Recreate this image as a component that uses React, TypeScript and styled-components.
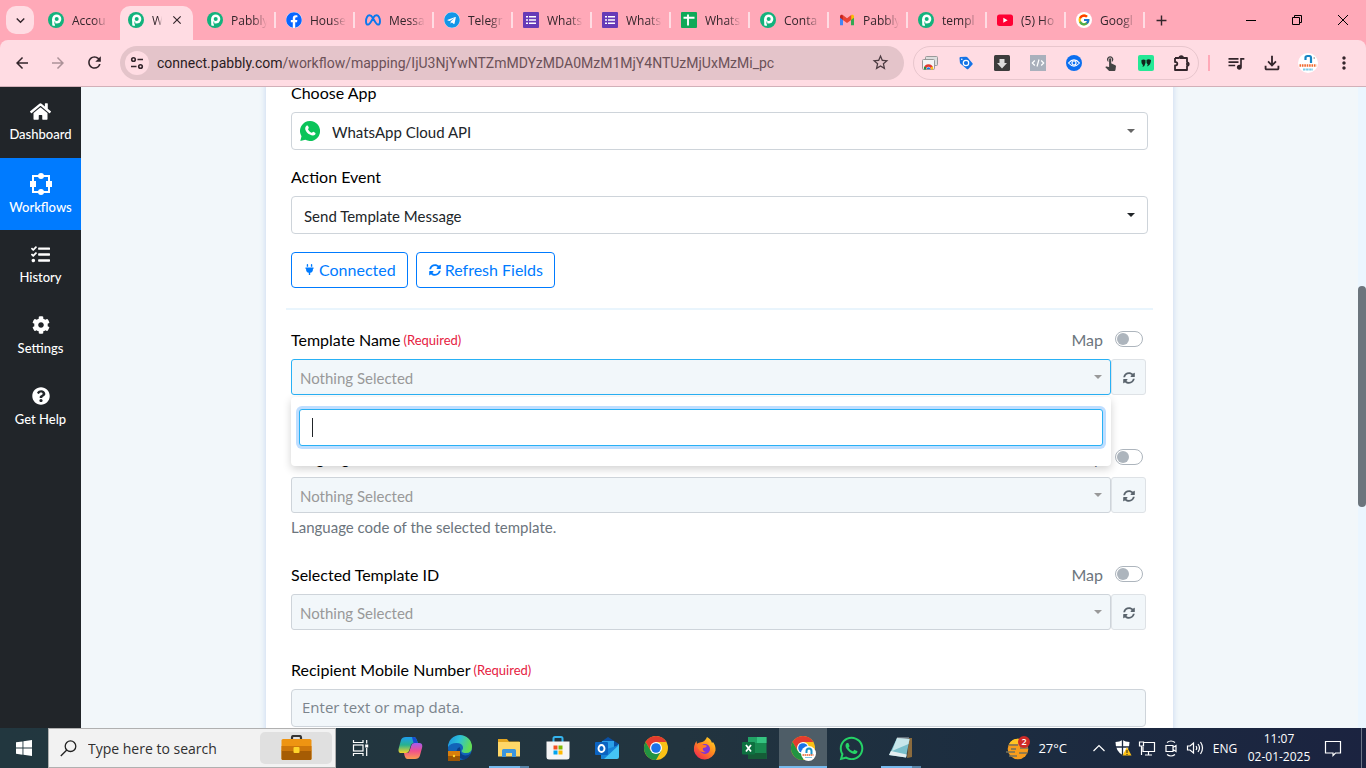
import React from "react";
import styled, { createGlobalStyle, css } from "styled-components";
import {
  FaHome,
  FaTasks,
  FaCog,
  FaQuestionCircle,
  FaPlug,
  FaSyncAlt,
  FaFacebook,
  FaTelegram,
  FaWhatsapp,
} from "react-icons/fa";
import { FcGoogle } from "react-icons/fc";
import {
  MdArrowBack,
  MdArrowForward,
  MdRefresh,
  MdStarOutline,
  MdAdd,
  MdClose,
  MdMoreVert,
  MdOutlineFileDownload,
  MdOutlineQueueMusic,
  MdTouchApp,
  MdKeyboardArrowDown,
} from "react-icons/md";

const ui = '"Open Sans", "Noto Sans", sans-serif';
const page = 'Lato, "Liberation Sans", sans-serif';

const Global = createGlobalStyle`
  *, *::before, *::after { box-sizing: border-box; }
  body { margin: 0; overflow: hidden; font-family: ${page}; }
  button, input, select { font: inherit; color: inherit; }
  button { border: 0; background: none; padding: 0; display: flex; align-items: center; justify-content: center; }
  svg { display: block; flex: none; }
`;

const Screen = styled.div`
  display: flex;
  flex-direction: column;
  height: 100vh;
`;

/* ---------- browser chrome ---------- */

const TabStrip = styled.header`
  display: flex;
  align-items: stretch;
  flex: none;
  height: 40px;
  background: #ffa9b8;
  font: 12px ${ui};
  color: #33252b;
`;

const TabSearch = styled.button`
  flex: none;
  width: 28px;
  height: 28px;
  margin: 6px 4px 6px 6px;
  border-radius: 10px;
  background: #ffdce3;
`;

const Tab = styled.div<{ $line?: boolean }>`
  position: relative;
  display: flex;
  align-items: center;
  gap: 8px;
  flex: 0 1 79px;
  min-width: 0;
  padding-left: 10px;
  ${(p) =>
    p.$line &&
    css`
      &::after {
        content: "";
        position: absolute;
        right: 0;
        top: 12px;
        width: 2px;
        height: 16px;
        background: #ffdce3;
      }
    `}
`;

const ActiveTab = styled.div`
  display: flex;
  align-items: center;
  gap: 8px;
  flex: 0 1 73px;
  margin: 6px 4px 0 3px;
  padding: 0 8px 6px;
  border-radius: 10px 10px 0 0;
  background: #ffdce3;
`;

const TabTitle = styled.span<{ $w?: number }>`
  width: ${(p) => p.$w ?? 36}px;
  overflow: hidden;
  white-space: nowrap;
  mask-image: linear-gradient(to right, #000 60%, transparent);
`;

const NewTab = styled.button`
  width: 32px;
`;

const WindowButtons = styled.div`
  display: flex;
  margin-left: auto;
`;

const WindowButton = styled.button`
  width: 46px;
`;

const ToolbarBack = styled.div`
  flex: none;
  background: #ffa9b8;
`;

const Toolbar = styled.div`
  display: flex;
  align-items: center;
  height: 47px;
  padding: 0 4px 1px;
  border-bottom: 1px solid #d2b0b8;
  border-radius: 8px 8px 0 0;
  background: #ffdce3;
  color: #33252b;
`;

const ToolButton = styled.button<{ $dim?: boolean }>`
  flex: none;
  width: 36px;
  height: 34px;
  opacity: ${(p) => (p.$dim ? 0.4 : 1)};
`;

const Omnibox = styled.div`
  display: flex;
  align-items: center;
  flex: 1;
  min-width: 0;
  height: 34px;
  margin: 0 9px 0 8px;
  padding: 0 6px 0 5px;
  border-radius: 17px;
  background: #e4c4ca;
  font: 14px Roboto, ${ui};
`;

const SiteInfo = styled.button`
  flex: none;
  width: 24px;
  height: 24px;
  margin-right: 8px;
  border-radius: 12px;
  background: #ffdce3;
`;

const Url = styled.span`
  flex: 1;
  overflow: hidden;
  white-space: nowrap;
  color: #6b5158;
  b {
    font-weight: 400;
    color: #2a1c22;
  }
`;

const Extensions = styled.div`
  display: flex;
  align-items: center;
  gap: 6px;
  flex: none;
  height: 34px;
  margin-right: 9px;
  padding: 0 1px;
  border: 1px solid #e8c6cd;
  border-radius: 17px;
`;

const ExtensionButton = styled.button`
  width: 30px;
  height: 30px;
`;

const ToolDivider = styled.span`
  width: 2px;
  height: 16px;
  margin-right: 8px;
  background: #ffa9b8;
`;

/* ---------- application ---------- */

const Workspace = styled.div`
  display: flex;
  flex: 1;
  min-height: 0;
  background: #f2f7fa;
`;

const Sidebar = styled.nav`
  flex: none;
  width: 81px;
  background: #212529;
`;

const NavLink = styled.a<{ $active?: boolean }>`
  display: flex;
  flex-direction: column;
  align-items: center;
  gap: 1px;
  height: ${(p) => (p.$active ? 72 : 71)}px;
  padding-top: ${(p) => (p.$active ? 14 : 12)}px;
  background: ${(p) => (p.$active ? "#007bff" : "transparent")};
  color: #fff;
  font-size: 13px;
  font-weight: 500;
  line-height: 20px;
  text-decoration: none;
`;

const NavIcon = styled.span`
  display: flex;
  align-items: center;
  justify-content: center;
  height: 24px;
`;

const Content = styled.main`
  flex: 1;
  min-width: 0;
  overflow: hidden;
`;

const Card = styled.form`
  width: min(907px, 100%);
  margin: -4px auto 0;
  padding: 0 25px 40px;
  background: #fff;
  box-shadow: 0 0 6px #c3d5ee;
  color: #000;
  font-size: 15px;
`;

const Label = styled.label`
  display: block;
  margin-bottom: 9px;
  font-size: 16px;
  line-height: 20px;
`;

const SelectBox = styled.div<{ $gap?: number }>`
  position: relative;
  display: flex;
  margin-bottom: ${(p) => p.$gap ?? 0}px;
`;

const PlainSelect = styled.select<{ $inset?: boolean }>`
  appearance: none;
  width: 100%;
  height: 38px;
  padding: 2px 32px 0 ${(p) => (p.$inset ? 40 : 12)}px;
  border: 1px solid #ced4da;
  border-radius: 4px;
  background: #fff;
  color: #212529;
`;

const MutedSelect = styled.select<{ $open?: boolean }>`
  appearance: none;
  width: 100%;
  height: 36px;
  padding: 1px 32px 0 8px;
  border: 1px solid ${(p) => (p.$open ? "#29b1f5" : "#ced4da")};
  border-radius: 3px;
  background: #f2f7fa;
  color: #999;
`;

const Caret = styled.span<{ $color?: string; $right?: number }>`
  position: absolute;
  right: ${(p) => p.$right ?? 13}px;
  top: 50%;
  margin-top: -2px;
  border: 4px solid transparent;
  border-top-color: ${(p) => p.$color ?? "#212529"};
  border-bottom: 0;
  pointer-events: none;
`;

const AppIcon = styled.span`
  position: absolute;
  left: 9px;
  top: 9px;
`;

const ButtonRow = styled.div`
  display: flex;
  gap: 8px;
  margin-bottom: 20px;
`;

const OutlineButton = styled.button`
  gap: 4px;
  height: 36px;
  padding: 0 11px 1px 12px;
  border: 1px solid #007bff;
  border-radius: 4px;
  background: #fff;
  color: #007bff;
  font-size: 16px;
`;

const Rule = styled.hr`
  height: 2px;
  margin: 0 -5px 20px;
  border: 0;
  background: #e9f5fd;
`;

const Field = styled.div<{ $gap: number }>`
  position: relative;
  margin: 0 2px ${(p) => p.$gap}px 0;
`;

const FieldHead = styled.div`
  display: flex;
  align-items: center;
  height: 20px;
  margin-bottom: 9px;
  font-size: 16px;
  line-height: 20px;
`;

const Required = styled.span`
  margin-left: 3px;
  color: #e6213f;
  font-size: 13px;
`;

const MapLabel = styled.label`
  display: flex;
  align-items: center;
  gap: 12px;
  margin-left: auto;
  padding-right: 3px;
  color: #6c757d;
`;

const Toggle = styled.input`
  appearance: none;
  display: flex;
  align-items: center;
  width: 28px;
  height: 16px;
  margin: 0 0 2px;
  padding-left: 1px;
  border: 1px solid #adb5bd;
  border-radius: 8px;
  background: #fff;
  &::before {
    content: "";
    width: 12px;
    height: 12px;
    border-radius: 6px;
    background: #adb5bd;
  }
`;

const FieldRow = styled.div`
  display: flex;
`;

const FieldSelect = styled(SelectBox)`
  flex: 1;
`;

const ReloadButton = styled.button`
  flex: none;
  width: 35px;
  height: 36px;
  padding-top: 1px;
  border: 1px solid #dee2e6;
  border-radius: 3px;
  background: #f2f7fa;
  color: #5a646d;
`;

const Hint = styled.p`
  margin: 4px 0 0;
  color: #6c757d;
  line-height: 20px;
`;

const Menu = styled.div`
  position: absolute;
  z-index: 1;
  top: 67px;
  left: 0;
  right: 35px;
  padding: 12px 8px 20px;
  border-radius: 4px;
  background: #fff;
  box-shadow: 0 3px 8px rgba(0, 0, 0, 0.18);
`;

const SearchWrap = styled.div`
  position: relative;
  &::after {
    content: "";
    position: absolute;
    left: 13px;
    top: 9px;
    width: 1px;
    height: 19px;
    background: #212529;
  }
`;

const SearchInput = styled.input`
  display: block;
  width: 100%;
  height: 37px;
  padding: 0 12px;
  border: 1px solid #29b1f5;
  border-radius: 3px;
  outline: 0;
  box-shadow: 0 0 0 3px #bfdeff;
  caret-color: transparent;
`;

const TextInput = styled.input`
  display: block;
  width: 100%;
  height: 38px;
  padding: 0 10px 2px;
  border: 1px solid #ced4da;
  border-radius: 4px;
  background: #f2f7fa;
  font: 15px ${ui};
  &::placeholder {
    color: #7b848c;
    opacity: 1;
  }
`;

const ScrollTrack = styled.div`
  flex: none;
  width: 8px;
  padding-top: 199px;
  background: #ebf6ff;
`;

const ScrollThumb = styled.div`
  height: 221px;
  border-radius: 4px;
  background: #6c757d;
`;

/* ---------- taskbar ---------- */

const Taskbar = styled.footer`
  display: flex;
  align-items: stretch;
  flex: none;
  height: 40px;
  background: linear-gradient(to right, #22373f, #22343f 50%, #1c2d40 72%, #1b2340);
  color: #fff;
  font: 12px ${ui};
`;

const TaskButton = styled.button<{ $w?: number; $active?: boolean; $open?: boolean }>`
  flex: none;
  width: ${(p) => p.$w ?? 49}px;
  background: ${(p) => (p.$active ? "#4e5d67" : "transparent")};
  box-shadow: ${(p) => (p.$active ? "inset 0 -2px #76b9ed" : "none")};
  ${(p) =>
    p.$open &&
    css`
      background: linear-gradient(to right, #76b9ed 31px, #5784a8 31px) 5px 38px / 40px 2px no-repeat;
    `}
`;

const SearchBar = styled.label`
  display: flex;
  align-items: center;
  flex: none;
  width: 288px;
  padding: 0 3px 0 11px;
  border: 1px solid #b0b0b0;
  background: #f2f2f2;
  color: #222;
  font-size: 14px;
`;

const SearchField = styled.input`
  flex: 1;
  min-width: 0;
  margin: 0 11px;
  padding: 0;
  border: 0;
  outline: 0;
  background: none;
  &::placeholder {
    color: #303030;
    opacity: 1;
  }
`;

const SearchArt = styled.span`
  display: flex;
  align-items: center;
  justify-content: center;
  width: 72px;
  height: 32px;
  border-radius: 5px;
  background: #e0e0e0;
`;

const Tray = styled.div`
  display: flex;
  align-items: center;
  margin-left: auto;
  padding-right: 4px;
`;

const Weather = styled.button`
  gap: 8px;
  margin-right: 20px;
  font-size: 13px;
`;

const Lang = styled.button`
  width: 36px;
`;

const Clock = styled.div`
  width: 72px;
  line-height: 18px;
  text-align: center;
`;

const DesktopEdge = styled.button`
  width: 1px;
  height: 40px;
  margin-left: 10px;
  background: #6d7687;
`;

/* ---------- drawings ---------- */

const Pabbly = () => (
  <svg width="16" height="16" viewBox="0 0 16 16">
    <circle cx="8" cy="8" r="8" fill="#12b27c" />
    <circle cx="8.7" cy="7" r="4.6" fill="#fff" />
    <path d="M4.1 7H6.8V14L4.3 13.4z" fill="#fff" />
    <circle cx="8.7" cy="7" r="2" fill="#12b27c" />
    <path d="M6.8 9.5v2.3" stroke="#12b27c" strokeWidth=".8" />
  </svg>
);

const Meta = () => (
  <svg width="16" height="16" viewBox="0 0 16 16" fill="none" stroke="#0b78ee" strokeWidth="1.9">
    <path d="M8 6.2C6.8 4.2 5.7 3.3 4.5 3.3 2.600 3.300 1 6 1 9.400c0 2 .7 3.200 2 3.200 1.500 0 2.700-2 5-6.400 1.100-2 2.200-2.900 3.500-2.900C13.400 3.300 15 6 15 9.400c0 2-.7 3.200-2 3.200-1.500 0-2.700-2.200-5-6.400z" />
  </svg>
);

const Forms = () => (
  <svg width="16" height="16" viewBox="0 0 16 16">
    <rect width="16" height="16" rx="1" fill="#673ab7" />
    <path d="M6 4.800h7M6 8h7M6 11.200h7M3 4.800h2M3 8h2M3 11.200h2" stroke="#fff" strokeWidth="1.600" />
  </svg>
);

const Sheets = () => (
  <svg width="16" height="16" viewBox="0 0 16 16">
    <rect width="16" height="16" rx="1" fill="#0fa958" />
    <path d="M2.500 5.800h11M7 2.500v11" stroke="#fff" strokeWidth="1.900" />
  </svg>
);

const Gmail = () => (
  <svg width="16" height="16" viewBox="0 0 16 16">
    <path d="M1 4v9.300h3V7z" fill="#4285f4" />
    <path d="M15 4v9.300h-3V7z" fill="#34a853" />
    <path d="M12 4.500V8l3-2.300V4.300C15 2.700 13.300 2.300 12.200 3z" fill="#fbbc04" />
    <path d="M1 4.300v1.400L4 8V4.500L3.800 3C2.600 2.300 1 2.800 1 4.300z" fill="#c5221f" />
    <path d="M3.800 3 8 6.300 12.200 3v5L8 11 3.800 8z" fill="#ea4335" />
  </svg>
);

const Youtube = () => (
  <svg width="16" height="16" viewBox="0 0 16 16">
    <rect y="2.500" width="16" height="11.500" rx="2.500" fill="#ff0033" />
    <path d="M6.300 5.700v5l4.300-2.500z" fill="#fff" />
  </svg>
);

const GoogleDisc = () => (
  <svg width="16" height="16" viewBox="0 0 16 16">
    <circle cx="8" cy="8" r="8" fill="#fff" />
    <FcGoogle x="1.500" y="1.500" size={13} />
  </svg>
);

const Chrome = ({ badge }: { badge?: boolean }) => (
  <svg width="26" height="26" viewBox="0 0 26 26">
    <circle cx="13" cy="13" r="12" fill="#fbc116" />
    <path d="M13 7H23.400A12 12 0 0 0 2.600 7L7.800 16z" fill="#e33b2e" />
    <path d="M2.600 7A12 12 0 0 0 13 25L18.200 16 7.800 16z" fill="#229342" />
    <circle cx="13" cy="13" r="6" fill="#fff" />
    <circle cx="13" cy="13" r="4.800" fill="#1a73e8" />
    {badge && (
      <g>
        <circle cx="18.500" cy="18.500" r="7.500" fill="#fff" />
        <path d="M16.500 18v-2a2.500 2.500 0 0 1 5 0v3.500" fill="none" stroke="#1893c9" strokeWidth="2" />
        <path d="M12.500 20h11" stroke="#e9602b" strokeWidth="1.700" strokeDasharray="1.500 .5" />
        <path d="M15 22.500h7" stroke="#7fc6e5" />
      </g>
    )}
  </svg>
);

const Avatar = () => (
  <svg width="20" height="20" viewBox="0 0 20 20">
    <circle cx="10" cy="10" r="10" fill="#fff" />
    <path d="M7.500 7V4.500Q7.500 3 9.500 3h2q1.500 0 1.500 2v5" fill="none" stroke="#1685c4" strokeWidth="2.200" />
    <path d="M15.500 5h1.500" stroke="#777" />
    <path d="M1.500 12.500h17" stroke="#f0682e" strokeWidth="2.600" strokeDasharray="1.600 .8" />
    <path d="M5 16.500h10" stroke="#7ccbe8" strokeWidth="1.800" strokeDasharray="2.500 .6" />
  </svg>
);

const SiteControls = () => (
  <svg width="14" height="14" viewBox="0 0 14 14" fill="none" stroke="#33252b" strokeWidth="1.600">
    <circle cx="3.500" cy="3.500" r="1.800" />
    <path d="M7.500 3.500H13M1 10.500h5.500" />
    <circle cx="10.500" cy="10.500" r="1.800" />
  </svg>
);

const Cards = () => (
  <svg width="16" height="16" viewBox="0 0 16 16">
    <rect x="3.500" y="1.500" width="12" height="9" rx="1" fill="#ddd" stroke="#999" />
    <rect x=".5" y="4.500" width="12" height="10" rx="1" fill="#f4f4f4" stroke="#999" />
    <path d="M3 14a3.500 3.500 0 0 1 7 0" fill="none" stroke="#e33b2e" strokeWidth="2.600" />
    <path d="M3 14.500v-2.500" stroke="#229342" strokeWidth="2" />
    <path d="M10 14.500v-2.500" stroke="#fbc116" strokeWidth="2" />
    <path d="M4.700 14a1.800 1.800 0 0 1 3.600 0z" fill="#1a73e8" />
  </svg>
);

const TagIcon = () => (
  <svg width="16" height="16" viewBox="0 0 16 16">
    <path d="M1.500 3Q1.500 2 2.500 2L8 1.800Q9 1.800 9.600 2.500L14.500 8.300Q15 9 14.500 9.600L10.300 14Q9.500 14.600 8.800 14L2.600 8.800Q2 8.300 1.900 7.500z" fill="#1473e6" />
    <circle cx="8" cy="8" r="2.700" fill="none" stroke="#fff" strokeWidth="1.200" />
    <circle cx="3.800" cy="4.200" r=".8" fill="#fff" />
  </svg>
);

const DownTile = () => (
  <svg width="16" height="16" viewBox="0 0 16 16">
    <rect width="16" height="16" rx="1.500" fill="#3c3c3c" />
    <path d="M5.500 4h5v4h2.500L8 13.500 3 8h2.500z" fill="#ddd" />
  </svg>
);

const CodeTile = () => (
  <svg width="16" height="16" viewBox="0 0 16 16">
    <rect width="16" height="16" fill="#a9b0bc" />
    <path d="M4.800 5.500 2.300 8l2.500 2.500M11.200 5.500 13.700 8l-2.500 2.500M9 4.500l-2 7" fill="none" stroke="#fff" strokeWidth="1.200" />
  </svg>
);

const EyeDisc = () => (
  <svg width="16" height="16" viewBox="0 0 16 16">
    <circle cx="8" cy="8" r="8" fill="#0b6ff0" />
    <path d="M2.500 8Q8 1.800 13.500 8 8 14.200 2.500 8z" fill="none" stroke="#fff" strokeWidth="1.100" />
    <circle cx="8" cy="8" r="2" fill="none" stroke="#fff" strokeWidth="1.200" />
  </svg>
);

const QuoteTile = () => (
  <svg width="16" height="16" viewBox="0 0 16 16">
    <rect width="16" height="16" rx="2" fill="#25e896" />
    <path d="M3.500 5q2-1 4 0v3q-.5 3-3 4l.5-2Q3 9 3.500 5zM8.500 5q2-1.500 4.500 0 0 5-4 6.500l.8-2Q8 8.500 8.500 5z" fill="#10251c" />
  </svg>
);

const Puzzle = () => (
  <svg width="18" height="18" viewBox="0 0 18 18" fill="none" stroke="#33252b" strokeWidth="1.800" strokeLinejoin="round">
    <path d="M2 4h4.500M10 4h4v4.500M14 11.500V16H2v-4.500q2.300 0 2.300-1.800T2 8V4M6.500 4a1.700 1.700 0 0 1 3.500 0" />
    <path d="M14 8.300a1.700 1.700 0 0 1 0 3.400" />
    <path d="M6.500 4H10M14 8.500v3" />
  </svg>
);

const WorkflowIcon = () => (
  <svg width="22" height="22" viewBox="0 0 22 22">
    <rect x="3" y="3" width="16" height="16" fill="none" stroke="#fff" strokeWidth="2" />
    <path d="M0 8h6v6H0zM16 8h6v6h-6z" fill="#fff" />
    <circle cx="11" cy="3" r="3" fill="#fff" />
    <circle cx="11" cy="19" r="3" fill="#fff" />
  </svg>
);

const WhatsAppBubble = () => (
  <svg width="20" height="20" viewBox="0 0 20 20">
    <path d="M10 0a10 10 0 1 1-4.700 18.800L.3 20l1.200-4.800A10 10 0 0 1 10 0z" fill="#0bc45a" />
    <path d="M6.500 4.800c.8-.6 1.400-.3 1.700.5l.6 1.500c.1.500-.9 1.200-.7 1.700.8 1.600 2 2.700 3.500 3.300.6.200 1.100-1.300 1.800-1l1.700.9c.8.4.4 1.500-.1 2.100-1.300 1.200-3 1-5.200-.2-2.200-1.200-3.900-3.200-4.500-5.200-.3-1.400.2-2.800 1.200-3.600z" fill="#fff" />
  </svg>
);

const Windows = () => (
  <svg width="16" height="16" viewBox="0 0 16 16" fill="#fff">
    <path d="M0 2.300 6.500 1.400V7.600H0zM7.400 1.200 16 0v7.600H7.400zM0 8.500h6.500v6.200L0 13.800zM7.400 8.500H16V16l-8.600-1.200z" />
  </svg>
);

const Magnifier = () => (
  <svg width="17" height="17" viewBox="0 0 17 17" fill="none" stroke="#222" strokeWidth="1.300">
    <circle cx="10.500" cy="6.200" r="5.300" />
    <path d="M6.800 10 .8 16" />
  </svg>
);

const Briefcase = () => (
  <svg width="31" height="26" viewBox="0 0 31 26">
    <path d="M11 5V2.500Q11 1 12.500 1h6Q20 1 20 2.500V5" fill="none" stroke="#333" strokeWidth="2.200" />
    <rect x=".5" y="4" width="30" height="21" rx="1.500" fill="#ee9412" />
    <path d="M.5 15.500h30v8q0 1.500-1.500 1.500H2q-1.500 0-1.500-1.500z" fill="#a65c04" />
    <path d="M.5 11h30v5H.5z" fill="#cd760a" />
    <rect x="12.500" y="12" width="6" height="6" rx="1" fill="#ffd42a" />
  </svg>
);

const TaskView = () => (
  <svg width="18" height="18" viewBox="0 0 18 18" fill="none" stroke="#fff" strokeWidth="1.200">
    <path d="M1.500 1v2.500h9.500V1M1.500 17v-2.500h9.500V17M14.700 1v3.500M14.700 9v8" />
    <rect x="1.500" y="6" width="9.500" height="6" />
    <path d="M13.200 5.500h3v3h-3z" fill="#fff" stroke="none" />
  </svg>
);

const Copilot = () => (
  <svg width="25" height="24" viewBox="0 0 25 24">
    <defs>
      <linearGradient id="cpA" x1="0" y1="0" x2="0" y2="1">
        <stop offset="0" stopColor="#1e9df0" />
        <stop offset=".5" stopColor="#27b28e" />
        <stop offset="1" stopColor="#f5d52a" />
      </linearGradient>
      <linearGradient id="cpB" x1="0" y1="0" x2="0" y2="1">
        <stop offset="0" stopColor="#a45cf0" />
        <stop offset=".5" stopColor="#f0508c" />
        <stop offset="1" stopColor="#fb9c4f" />
      </linearGradient>
    </defs>
    <path d="M8 1h8q2 0 2.800 3L20 7h-4.500q-2 0-2.700 2.500L11 15q-.8 2-3 2H3.500Q-.5 17 .8 12L3 4Q4 1 8 1z" fill="url(#cpA)" />
    <path d="M14 1h2q2 0 2.800 3L20 7h-4.500z" fill="#174cce" />
    <path d="M17 23H9.500q-2 0-3-3.500L6 17h3q2 0 2.700-2.500L13.500 9q.8-2 3-2h4.700q4 0 2.800 5l-2.200 8q-1 3-4.800 3z" fill="url(#cpB)" />
  </svg>
);

const Edge = () => (
  <svg width="26" height="26" viewBox="0 0 26 26">
    <defs>
      <linearGradient id="edA" x1="0" y1="0" x2="1" y2=".3">
        <stop offset="0" stopColor="#1c8fe0" />
        <stop offset=".5" stopColor="#2cc0d8" />
        <stop offset="1" stopColor="#62dc55" />
      </linearGradient>
    </defs>
    <circle cx="13" cy="13" r="12" fill="#1263b8" />
    <path d="M1 12A12 12 0 0 1 25 12q0 6-6 6-4 0-4.500-2 2-1.500 1.500-4Q15 8 9.500 8 3.500 8 1 12z" fill="url(#edA)" />
    <path d="M13.500 16q.5 4 4.500 4.500 3 .3 6-2.500-2 5-7 6.700Q9 22 9.500 16q.5-3 3-4 1.500 2 1 4z" fill="#0b3f86" />
    <g transform="translate(1 15)">
      <rect width="12" height="10" fill="#d97e0c" y="1" />
      <path d="M0 6h12v5H0z" fill="#9c5605" />
      <circle cx="6" cy="6" r="1.200" fill="#ffd42a" />
    </g>
  </svg>
);

const Folder = () => (
  <svg width="24" height="22" viewBox="0 0 24 22">
    <path d="M1 2h9l2 2.500h10.500V19H1z" fill="#e3a520" />
    <path d="M1 5h22v14.500H1z" fill="#ffd768" />
    <path d="M5 20v-6.500Q5 12 6.500 12h11q1.500 0 1.500 1.500V20h-4v-4H9v4z" fill="#3b95dd" />
  </svg>
);

const Store = () => (
  <svg width="24" height="26" viewBox="0 0 24 26">
    <path d="M7.500 7V3.500Q7.500 2 9 2h6q1.500 0 1.500 1.500V7" fill="none" stroke="#35b4ee" strokeWidth="2" />
    <path d="M.5 6.500h23V22q0 2.500-2.500 2.500H3Q.5 24.500.5 22z" fill="#f5f5f5" />
    <path d="M7.500 10.500h4v4h-4z" fill="#f25022" />
    <path d="M12.500 10.500h4v4h-4z" fill="#7fba00" />
    <path d="M7.500 15.500h4v4h-4z" fill="#00a4ef" />
    <path d="M12.500 15.500h4v4h-4z" fill="#ffb900" />
  </svg>
);

const Outlook = () => (
  <svg width="26" height="24" viewBox="0 0 26 24">
    <path d="M4 8 14 1l11 7v12H8z" fill="#0a4fa3" />
    <path d="M8 5h12v11H8z" fill="#2b9fe8" />
    <path d="M25 8v13q0 2-2 2H9z" fill="#45c4f5" />
    <path d="m7 15 18-6-15 14H7z" fill="#1683d8" />
    <rect x="1" y="6" width="13" height="13" rx="1" fill="#0b63c1" />
    <ellipse cx="7.500" cy="12.500" rx="3" ry="3.500" fill="none" stroke="#fff" strokeWidth="1.900" />
  </svg>
);

const Firefox = () => (
  <svg width="24" height="25" viewBox="0 0 24 25">
    <defs>
      <linearGradient id="ffA" x1="1" y1="0" x2=".2" y2="1">
        <stop offset="0" stopColor="#ffe226" />
        <stop offset=".5" stopColor="#ff8a1e" />
        <stop offset="1" stopColor="#f2264f" />
      </linearGradient>
    </defs>
    <path d="M14 1q4 2 5 6l1-1q3 4 2.500 8.500A11 11 0 0 1 1 15Q.5 9 3.500 5l.5 3q1-1.500 3-1.500Q12 6 14 1z" fill="url(#ffA)" />
    <circle cx="12" cy="13" r="5" fill="#8033d8" />
    <path d="M4 8q4-2 6 1 3-.5 4 1-1 2-4 2-1 3 3 4-5 1-7.500-3Q4 11 4 8z" fill="#ff7a26" />
  </svg>
);

const Excel = () => (
  <svg width="25" height="22" viewBox="0 0 25 22">
    <path d="M6 0h18.500v22H6z" fill="#188a50" />
    <path d="M15 0h9.500v6H15z" fill="#35c481" />
    <path d="M6 0h9v6H6z" fill="#21a366" />
    <path d="M6 16h18.500v6H6z" fill="#155c37" />
    <rect y="5" width="13" height="12.500" rx="1" fill="#0d7140" />
    <path d="m4 8 5 6.500M9 8l-5 6.500" stroke="#fff" strokeWidth="1.800" />
  </svg>
);

const Notepad = () => (
  <svg width="24" height="24" viewBox="0 0 24 24">
    <path d="M20 2h3v19l-5 1z" fill="#8b6b3d" />
    <path d="M8 2 20.500 3 17 21.500 0 19z" fill="#79bfcb" />
    <path d="M8 2 20.500 3 19.500 8 3 15z" fill="#c7e6ea" />
    <path d="M0 19 17 21.500l.7-3L2 15z" fill="#e4edf0" />
    <path d="M8.500 2h12" stroke="#ddd" strokeWidth="1.600" strokeDasharray="1 1" />
  </svg>
);

const WeatherIcon = () => (
  <svg width="24" height="24" viewBox="0 0 24 24">
    <circle cx="12" cy="13" r="10.300" fill="#f79c1c" />
    <path d="M3 8a10.300 10.300 0 0 1 18 0z" fill="#ffc524" />
    <path d="M3 9h9M14 12h8M0 16h9M5 13h5M13 17h8M3 20h8" stroke="#76715b" strokeWidth="1.500" />
    <circle cx="18" cy="6" r="6" fill="#cf2a27" />
    <text x="18" y="9" fill="#fff" fontFamily="Open Sans" fontSize="9" fontWeight="600" textAnchor="middle">
      2
    </text>
  </svg>
);

const Shield = () => (
  <svg width="18" height="18" viewBox="0 0 18 18">
    <path d="M8.500 1q3 2 7 2 0 9-7 13Q1.500 12 1.500 3q4 0 7-2z" fill="#fff" />
    <path d="M8.500 1v15M1.500 8h14" stroke="#1b2940" strokeWidth="1.300" />
    <path d="m13 8 4.500 8.500h-9z" fill="#ffc214" />
    <path d="M13 11v3M13 15v1" stroke="#222" />
  </svg>
);

const TrayGlyph = ({ d, w = 18 }: { d: string; w?: number }) => (
  <svg width={w} height="18" viewBox={`0 0 ${w} 18`} fill="none" stroke="#fff" strokeWidth="1.200">
    <path d={d} />
  </svg>
);

/* ---------- page ---------- */

const Disc = styled.span`
  display: flex;
  flex: none;
  border-radius: 8px;
  background: #fff;
`;

const tabs = [
  { icon: <Pabbly />, title: "Pabbly" },
  { icon: <Disc><FaFacebook size={16} color="#0866ff" /></Disc>, title: "House" },
  { icon: <Meta />, title: "Messa" },
  { icon: <Disc><FaTelegram size={16} color="#1296e8" /></Disc>, title: "Telegr" },
  { icon: <Forms />, title: "Whats" },
  { icon: <Forms />, title: "Whats" },
  { icon: <Sheets />, title: "Whats" },
  { icon: <Pabbly />, title: "Conta" },
  { icon: <Gmail />, title: "Pabbly" },
  { icon: <Pabbly />, title: "templ" },
  { icon: <Youtube />, title: "(5) Ho" },
  { icon: <GoogleDisc />, title: "Googl" },
];

const extensions = [
  { name: "Screen cards", icon: <Cards /> },
  { name: "Tag assistant", icon: <TagIcon /> },
  { name: "Downloader", icon: <DownTile /> },
  { name: "Code view", icon: <CodeTile /> },
  { name: "Viewer", icon: <EyeDisc /> },
  { name: "Auto clicker", icon: <MdTouchApp size={17} color="#444" /> },
  { name: "Quotes", icon: <QuoteTile /> },
  { name: "Extensions", icon: <Puzzle /> },
];

const nav = [
  { icon: <FaHome size={21} />, text: "Dashboard" },
  { icon: <WorkflowIcon />, text: "Workflows", active: true },
  { icon: <FaTasks size={19} />, text: "History" },
  { icon: <FaCog size={18} />, text: "Settings" },
  { icon: <FaQuestionCircle size={18} />, text: "Get Help" },
];

type MappedProps = {
  id: string;
  label: string;
  gap: number;
  required?: boolean;
  open?: boolean;
  hint?: string;
};

const MappedField = ({ id, label, gap, required, open, hint }: MappedProps) => (
  <Field $gap={gap}>
    <FieldHead>
      <label htmlFor={id}>{label}</label>
      {required && <Required>(Required)</Required>}
      <MapLabel>
        Map
        <Toggle type="checkbox" />
      </MapLabel>
    </FieldHead>
    <FieldRow>
      <FieldSelect>
        <MutedSelect id={id} $open={open}>
          <option>Nothing Selected</option>
        </MutedSelect>
        <Caret $color="#999" $right={9} />
      </FieldSelect>
      <ReloadButton type="button" aria-label="Reload options">
        <FaSyncAlt size={12} />
      </ReloadButton>
    </FieldRow>
    {hint && <Hint>{hint}</Hint>}
    {open && (
      <Menu>
        <SearchWrap>
          <SearchInput type="text" aria-label="Search options" />
        </SearchWrap>
      </Menu>
    )}
  </Field>
);

export default function App() {
  return (
    <Screen>
      <Global />
      <TabStrip>
        <TabSearch aria-label="Search tabs">
          <MdKeyboardArrowDown size={17} />
        </TabSearch>
        <Tab>
          <Pabbly />
          <TabTitle>Accou</TabTitle>
        </Tab>
        <ActiveTab>
          <Pabbly />
          <TabTitle $w={10}>W</TabTitle>
          <MdClose size={14} />
        </ActiveTab>
        {tabs.map((t, i) => (
          <Tab key={i} $line>
            {t.icon}
            <TabTitle>{t.title}</TabTitle>
          </Tab>
        ))}
        <NewTab aria-label="New tab">
          <MdAdd size={17} />
        </NewTab>
        <WindowButtons>
          <WindowButton aria-label="Minimize">
            <svg width="10" height="10" stroke="#000">
              <path d="M0 5.500h10" />
            </svg>
          </WindowButton>
          <WindowButton aria-label="Restore">
            <svg width="10" height="10" fill="none" stroke="#000">
              <path d="M.5 2.500h7v7h-7zM2.500 2.500v-2h7v7h-2" />
            </svg>
          </WindowButton>
          <WindowButton aria-label="Close">
            <svg width="10" height="10" stroke="#000">
              <path d="m0 0 10 10M10 0 0 10" />
            </svg>
          </WindowButton>
        </WindowButtons>
      </TabStrip>
      <ToolbarBack>
        <Toolbar>
          <ToolButton aria-label="Back">
            <MdArrowBack size={18} />
          </ToolButton>
          <ToolButton aria-label="Forward" $dim>
            <MdArrowForward size={18} />
          </ToolButton>
          <ToolButton aria-label="Reload">
            <MdRefresh size={19} />
          </ToolButton>
          <Omnibox>
            <SiteInfo aria-label="Site information">
              <SiteControls />
            </SiteInfo>
            <Url>
              <b>connect.pabbly.com</b>/workflow/mapping/IjU3NjYwNTZmMDYzMDA0MzM1MjY4NTUzMjUxMzMi_pc
            </Url>
            <ToolButton aria-label="Bookmark">
              <MdStarOutline size={19} color="#4d3c42" />
            </ToolButton>
          </Omnibox>
          <Extensions>
            {extensions.map((e) => (
              <ExtensionButton key={e.name} aria-label={e.name}>
                {e.icon}
              </ExtensionButton>
            ))}
          </Extensions>
          <ToolDivider />
          <ToolButton aria-label="Media">
            <MdOutlineQueueMusic size={20} />
          </ToolButton>
          <ToolButton aria-label="Downloads">
            <MdOutlineFileDownload size={22} />
          </ToolButton>
          <ToolButton aria-label="Profile">
            <Avatar />
          </ToolButton>
          <ToolButton aria-label="Menu">
            <MdMoreVert size={20} />
          </ToolButton>
        </Toolbar>
      </ToolbarBack>

      <Workspace>
        <Sidebar>
          {nav.map((n) => (
            <NavLink key={n.text} href="#" $active={n.active}>
              <NavIcon>{n.icon}</NavIcon>
              {n.text}
            </NavLink>
          ))}
        </Sidebar>
        <Content>
          <Card>
            <Label htmlFor="app">Choose App</Label>
            <SelectBox $gap={17}>
              <PlainSelect id="app" $inset>
                <option>WhatsApp Cloud API</option>
              </PlainSelect>
              <AppIcon>
                <WhatsAppBubble />
              </AppIcon>
              <Caret $color="#666" />
            </SelectBox>
            <Label htmlFor="event">Action Event</Label>
            <SelectBox $gap={18}>
              <PlainSelect id="event">
                <option>Send Template Message</option>
              </PlainSelect>
              <Caret />
            </SelectBox>
            <ButtonRow>
              <OutlineButton type="button">
                <FaPlug size={11} />
                Connected
              </OutlineButton>
              <OutlineButton type="button">
                <FaSyncAlt size={12} />
                Refresh Fields
              </OutlineButton>
            </ButtonRow>
            <Rule />
            <MappedField id="template" label="Template Name" gap={53} required open />
            <MappedField
              id="language"
              label="Language Code"
              gap={28}
              hint="Language code of the selected template."
            />
            <MappedField id="template-id" label="Selected Template ID" gap={30} />
            <Field $gap={30}>
              <FieldHead>
                <label htmlFor="mobile">Recipient Mobile Number</label>
                <Required>(Required)</Required>
              </FieldHead>
              <TextInput id="mobile" type="text" placeholder="Enter text or map data." />
            </Field>
          </Card>
        </Content>
        <ScrollTrack>
          <ScrollThumb />
        </ScrollTrack>
      </Workspace>

      <Taskbar>
        <TaskButton $w={48} aria-label="Start">
          <Windows />
        </TaskButton>
        <SearchBar>
          <Magnifier />
          <SearchField type="text" placeholder="Type here to search" />
          <SearchArt>
            <Briefcase />
          </SearchArt>
        </SearchBar>
        <TaskButton aria-label="Task view">
          <TaskView />
        </TaskButton>
        <TaskButton $w={50} aria-label="Copilot">
          <Copilot />
        </TaskButton>
        <TaskButton aria-label="Edge">
          <Edge />
        </TaskButton>
        <TaskButton aria-label="File Explorer" $open>
          <Folder />
        </TaskButton>
        <TaskButton aria-label="Store">
          <Store />
        </TaskButton>
        <TaskButton aria-label="Outlook">
          <Outlook />
        </TaskButton>
        <TaskButton aria-label="Chrome">
          <Chrome />
        </TaskButton>
        <TaskButton aria-label="Firefox">
          <Firefox />
        </TaskButton>
        <TaskButton $w={50} aria-label="Excel">
          <Excel />
        </TaskButton>
        <TaskButton $w={48} aria-label="Chrome, profile" $active>
          <Chrome badge />
        </TaskButton>
        <TaskButton aria-label="WhatsApp">
          <FaWhatsapp size={27} color="#25d366" />
        </TaskButton>
        <TaskButton aria-label="Notepad" $open>
          <Notepad />
        </TaskButton>
        <Tray>
          <Weather>
            <WeatherIcon />
            27°C
          </Weather>
          <TaskButton $w={24} aria-label="Hidden icons">
            <TrayGlyph w={14} d="m1.500 12 5.500-5.500 5.500 5.500" />
          </TaskButton>
          <TaskButton $w={24} aria-label="Security">
            <Shield />
          </TaskButton>
          <TaskButton $w={24} aria-label="Network">
            <TrayGlyph d="M6 3.500h10.500v9H5V8M10.500 12.500v3M7 16h7M1.500 3h4v4h-4zM3.500 7v9" />
          </TaskButton>
          <TaskButton $w={24} aria-label="Camera">
            <TrayGlyph
              w={14}
              d="M2 6.500h7v6H2zM9 8.500l3-2v6l-3-2M3 3.500Q7 .5 11 3.500M3 15.500q4 3 8 0"
            />
          </TaskButton>
          <TaskButton $w={24} aria-label="Volume">
            <TrayGlyph d="M1.500 7v4H4l3.500 3V4L4 7zM10 7q1.500 2 0 4M12 5q3 4 0 8M14.500 3q4 6 0 12" />
          </TaskButton>
          <Lang>ENG</Lang>
          <Clock>
            11:07
            <br />
            02-01-2025
          </Clock>
          <TaskButton $w={36} aria-label="Notifications">
            <TrayGlyph d="M1.500 2.500h15v11.500h-5L9 16.500V14H1.500z" />
          </TaskButton>
          <DesktopEdge aria-label="Show desktop" />
        </Tray>
      </Taskbar>
    </Screen>
  );
}
